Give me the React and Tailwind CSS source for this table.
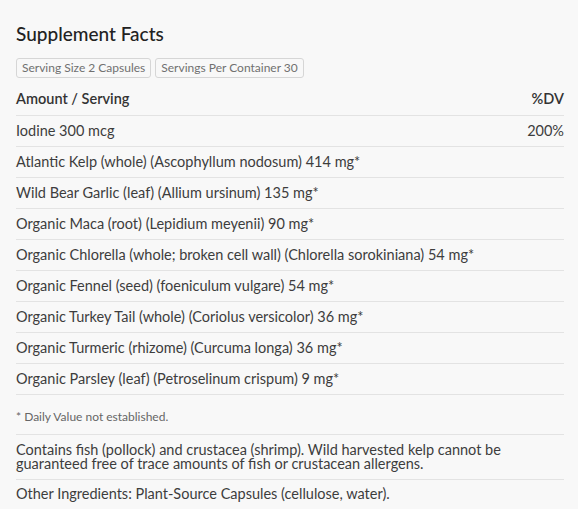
const rows = [
  ["Iodine 300 mcg", "200%"],
  ["Atlantic Kelp (whole) (Ascophyllum nodosum) 414 mg*", ""],
  ["Wild Bear Garlic (leaf) (Allium ursinum) 135 mg*", ""],
  ["Organic Maca (root) (Lepidium meyenii) 90 mg*", ""],
  ["Organic Chlorella (whole; broken cell wall) (Chlorella sorokiniana) 54 mg*", ""],
  ["Organic Fennel (seed) (foeniculum vulgare) 54 mg*", ""],
  ["Organic Turkey Tail (whole) (Coriolus versicolor) 36 mg*", ""],
  ["Organic Turmeric (rhizome) (Curcuma longa) 36 mg*", ""],
  ["Organic Parsley (leaf) (Petroselinum crispum) 9 mg*", ""],
];

export default function App() {
  return (
    <div className="min-h-[509px] bg-[#f8f8f8] pl-4 pr-[14px] pt-[22px] text-[#3d3d3d] font-['Lato',sans-serif]">
      <h2 className="text-[19px] font-medium leading-[24px] text-[#222]">Supplement Facts</h2>

      {/* serving info */}
      <div className="mt-[12px] flex gap-[4px]">
        <span className="rounded-[3px] border border-[#d6d6d6] px-[5px] py-[2px] text-[12px] leading-[14px] text-[#707070]">
          Serving Size 2 Capsules
        </span>
        <span className="rounded-[3px] border border-[#d6d6d6] px-[5px] py-[2px] text-[12px] leading-[14px] text-[#707070]">
          Servings Per Container 30
        </span>
      </div>

      <div className="mt-[11px] flex justify-between border-b border-[#e3e3e3] pb-[6px] text-[14.5px] font-semibold leading-[20px] text-[#333]">
        <span>Amount / Serving</span>
        <span>%DV</span>
      </div>

      {rows.map(([name, dv]) => (
        <div
          key={name}
          className="flex justify-between border-b border-[#e3e3e3] py-[5px] text-[14.5px] leading-[20px]"
        >
          <span>{name}</span>
          <span>{dv}</span>
        </div>
      ))}

      <p className="border-b border-[#e3e3e3] pt-[14px] pb-[9px] text-[12px] leading-[16px] text-[#666]">
        * Daily Value not established.
      </p>
      <p className="border-b border-[#e3e3e3] py-[8px] text-[14.5px] leading-[14px]">
        Contains fish (pollock) and crustacea (shrimp). Wild harvested kelp cannot be guaranteed free of trace amounts of fish or crustacean allergens.
      </p>
      <p className="pt-[4px] text-[14.5px] leading-[20px]">
        Other Ingredients: Plant-Source Capsules (cellulose, water).
      </p>
    </div>
  );
}
